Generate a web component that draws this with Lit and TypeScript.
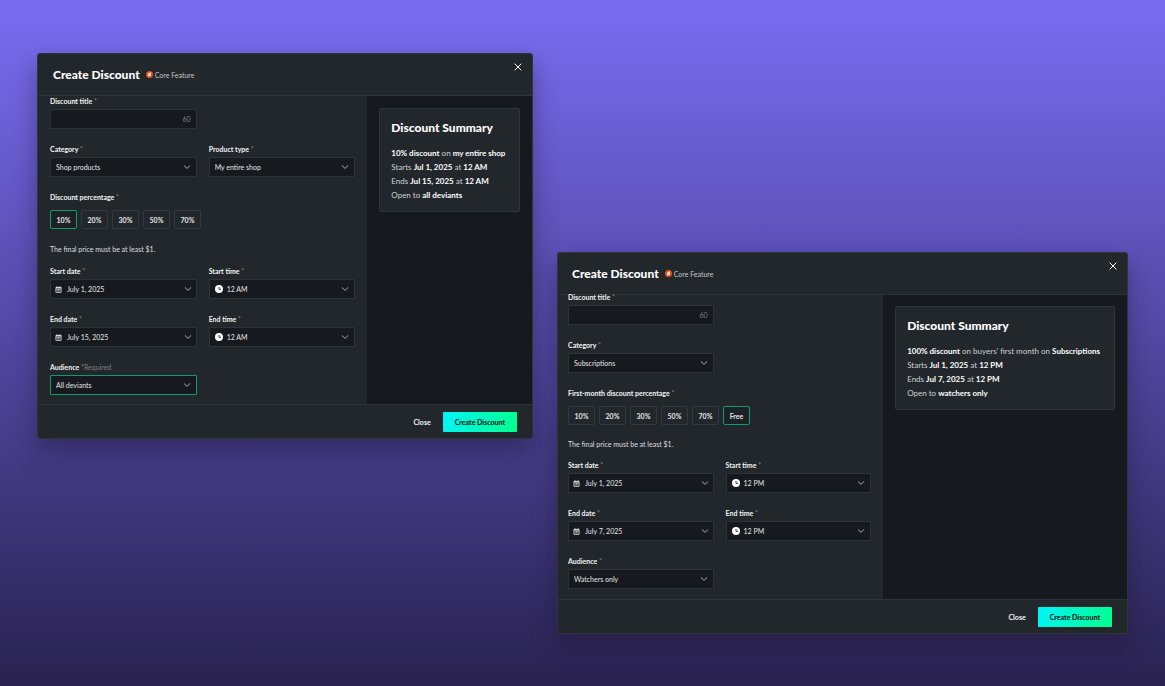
import { LitElement, html, css, nothing } from "lit";
import { customElement, property } from "lit/decorators.js";
import { classMap } from "lit/directives/class-map.js";

interface DiscountConfig {
  category: string;
  productType?: string;
  percentageLabel: string;
  percentages: string[];
  selected: string;
  startDate: string;
  startTime: string;
  endDate: string;
  endTime: string;
  audience: string;
  audienceActive?: boolean;
  offer: string;
  joiner: string;
  target: string;
  startShort: string;
  endShort: string;
  audienceText: string;
}

const shopSale: DiscountConfig = {
  category: "Shop products",
  productType: "My entire shop",
  percentageLabel: "Discount percentage",
  percentages: ["10%", "20%", "30%", "50%", "70%"],
  selected: "10%",
  startDate: "July 1, 2025",
  startTime: "12 AM",
  endDate: "July 15, 2025",
  endTime: "12 AM",
  audience: "All deviants",
  audienceActive: true,
  offer: "10% discount",
  joiner: "on",
  target: "my entire shop",
  startShort: "Jul 1, 2025",
  endShort: "Jul 15, 2025",
  audienceText: "all deviants",
};

const subscriptionSale: DiscountConfig = {
  category: "Subscriptions",
  percentageLabel: "First-month discount percentage",
  percentages: ["10%", "20%", "30%", "50%", "70%", "Free"],
  selected: "Free",
  startDate: "July 1, 2025",
  startTime: "12 PM",
  endDate: "July 7, 2025",
  endTime: "12 PM",
  audience: "Watchers only",
  offer: "100% discount",
  joiner: "on buyers’ first month on",
  target: "Subscriptions",
  startShort: "Jul 1, 2025",
  endShort: "Jul 7, 2025",
  audienceText: "watchers only",
};

const calendarIcon = html`<svg class="lead" viewBox="0 0 14 14" aria-hidden="true">
  <path fill="currentColor" fill-rule="evenodd" d="M3 .5h2V2h4V.5h2V2h.5A1.500 1.500 0 0 1 13 3.500V12a1.500 1.500 0 0 1-1.500 1.500h-9A1.500 1.500 0 0 1 1 12V3.500A1.500 1.500 0 0 1 2.500 2H3zM2.600 5.200V12h8.800V5.200zM3.500 6.200h1.800v1.800H3.500zm2.600 0h1.800v1.800H6.100zm2.600 0h1.800v1.800H8.700zM3.500 9.200h1.800V11H3.500zm2.600 0h1.800V11H6.100zm2.600 0h1.800V11H8.700z"/>
</svg>`;

const clockIcon = html`<svg class="lead clock" viewBox="0 0 16 16" aria-hidden="true">
  <circle cx="8" cy="8" r="8" fill="#fff" />
  <path d="M8 3.800V8.600h4" fill="none" stroke="#16191f" stroke-width="1.700" />
</svg>`;

const chevron = html`<svg class="chevron" viewBox="0 0 8 8" aria-hidden="true">
  <path d="M1.200 2.700 4 5.400 6.800 2.700" fill="none" stroke="currentColor" stroke-width="0.900" stroke-linecap="round" stroke-linejoin="round" />
</svg>`;

@customElement("discount-dialog")
export class DiscountDialog extends LitElement {
  @property({ attribute: false }) config: DiscountConfig = shopSale;

  static styles = css`
    :host {
      display: block;
    }
    * {
      box-sizing: border-box;
    }
    .dialog {
      display: flex;
      flex-direction: column;
      border: 1px solid #30353a;
      border-radius: 3px;
      overflow: hidden;
      background: #22272b;
      color: #f2f4f4;
      box-shadow: 0 12px 24px rgba(24, 20, 45, 0.4);
      font: 7px/10px Lato, "Noto Sans", sans-serif;
    }
    .header {
      display: flex;
      align-items: center;
      height: 42px;
      padding: 0 7px 0 var(--header-inset, 15px);
      border-bottom: 1px solid #2e3438;
    }
    .title {
      margin: 0;
      font-size: 12px;
      line-height: 16px;
      font-weight: 900;
      color: #fff;
    }
    .core {
      display: flex;
      align-items: center;
      gap: 2px;
      margin-left: 6px;
      color: #c3c6c9;
    }
    .core svg {
      width: 7px;
      height: 7px;
    }
    .dismiss {
      align-self: flex-start;
      display: flex;
      margin: 6px 0 0 auto;
      padding: 3px;
      border: 0;
      background: none;
      color: #fff;
    }
    .dismiss svg {
      width: 8px;
      height: 8px;
    }
    .body {
      display: grid;
      grid-template-columns: var(--body-columns, 2fr 1fr);
    }
    .form {
      display: grid;
      grid-template-columns: 1fr 1fr;
      column-gap: 12px;
      row-gap: 15px;
      margin-top: var(--scroll-shift, 0);
      padding: 0 12px var(--form-end, 9px) var(--form-inset, 12px);
      align-content: start;
    }
    .field {
      grid-column: 1;
      min-width: 0;
    }
    .field.second {
      grid-column: 2;
    }
    .label {
      display: block;
      font-weight: 700;
      color: #f2f4f4;
      margin-bottom: 3px;
      white-space: nowrap;
    }
    .star {
      font-weight: 400;
      color: #7b8187;
    }
    .control {
      display: grid;
      align-items: center;
    }
    .control > * {
      grid-area: 1 / 1;
    }
    .box {
      width: 100%;
      height: 20px;
      margin: 0;
      padding: 0 5px;
      border: 1px solid #2c3237;
      border-radius: 0;
      appearance: none;
      background: #16191e;
      color: #e4e6e8;
      font: inherit;
      outline: none;
    }
    .date .box {
      padding-left: 16px;
    }
    .time .box {
      padding-left: 17px;
    }
    .box.active {
      border-color: #149a70;
      border-radius: 1px;
    }
    .counter {
      justify-self: end;
      padding-right: 6px;
      color: #7b8086;
      pointer-events: none;
    }
    .chevron {
      justify-self: end;
      width: 8px;
      height: 8px;
      margin-right: 6px;
      color: #b9bdc4;
      pointer-events: none;
    }
    .date .chevron {
      margin-right: 5px;
    }
    .lead {
      width: 7px;
      height: 7px;
      margin-left: 5px;
      color: #d9dbdd;
      pointer-events: none;
    }
    .clock {
      width: 8px;
      height: 8px;
      margin-left: 6px;
    }
    .choices {
      grid-column: 1 / -1;
      margin: 0;
      padding: 0;
      border: 0;
      min-width: 0;
    }
    .choices .label {
      padding: 0;
      margin-bottom: 8px;
    }
    .options {
      display: flex;
      gap: 4px;
    }
    .option {
      width: 27px;
      height: 19px;
      padding: 0;
      border: 1px solid #343940;
      border-radius: 2px;
      background: none;
      color: #e4e6e8;
      font: inherit;
      font-weight: 700;
    }
    .option.chosen {
      border-color: #149a70;
      background: #1c2126;
    }
    .hint {
      grid-column: 1 / -1;
      margin: var(--hint-margin, 0 0 -3px);
      color: #dcdfe1;
    }
    .side {
      padding: var(--side-top, 12px) 12px 12px;
      background: #16191e;
    }
    .summary {
      padding: 11px 11px 9px;
      border: 1px solid #30353c;
      border-radius: 2px;
      background: #22272b;
      color: #cfd2d5;
    }
    .summary h3 {
      margin: 0 0 10px;
      font-size: 12px;
      line-height: 16px;
      font-weight: 900;
      color: #fff;
    }
    .summary p {
      margin: 0;
      font-size: 8px;
      line-height: 14px;
      white-space: nowrap;
    }
    .summary strong {
      color: #fff;
    }
    .footer {
      display: flex;
      align-items: center;
      justify-content: flex-end;
      height: 34px;
      padding-right: 15px;
      border-top: 1px solid #2e3438;
    }
    .close,
    .create {
      height: 20px;
      padding: 0 12px;
      border: 0;
      background: none;
      color: #f2f4f4;
      font: inherit;
      font-weight: 700;
    }
    .create {
      border-radius: 1px;
      background: linear-gradient(110deg, #00f4f8, #00ff8c);
      color: #06070d;
    }
  `;

  private star(text = "*") {
    return html`<span class="star">${text}</span>`;
  }

  private select(
    id: string,
    label: string,
    value: string,
    opts: { kind?: "date" | "time"; second?: boolean; active?: boolean } = {}
  ) {
    const icon = opts.kind === "date" ? calendarIcon : opts.kind === "time" ? clockIcon : nothing;
    return html`<div class=${classMap({ field: true, second: !!opts.second })}>
      <label class="label" for=${id}>${label} ${this.star(opts.active ? "*Required" : "*")}</label>
      <div class=${classMap({ control: true, date: opts.kind === "date", time: opts.kind === "time" })}>
        <select id=${id} class=${classMap({ box: true, active: !!opts.active })}>
          <option>${value}</option>
        </select>
        ${icon} ${chevron}
      </div>
    </div>`;
  }

  render() {
    const c = this.config;
    return html`<section class="dialog" role="dialog" aria-labelledby="title">
      <header class="header">
        <h2 class="title" id="title">Create Discount</h2>
        <span class="core">
          <svg viewBox="0 0 14 14" aria-hidden="true">
            <circle cx="7" cy="7" r="7" fill="#e8501c" />
            <path fill="#fff" d="M9.800 2.800v1.900L8.300 7.200h1.500v2.300H7.100l-.9 1.700H4.200V9.300l1.500-2.500H4.200V4.500h2.700l.9-1.700z" />
          </svg>
          Core Feature
        </span>
        <button class="dismiss" aria-label="Dismiss">
          <svg viewBox="0 0 8 8"><path d="M.9.9l6.200 6.200M7.100.9L.9 7.100" stroke="currentColor" stroke-width="1" stroke-linecap="round" /></svg>
        </button>
      </header>
      <div class="body">
        <form class="form">
          <div class="field">
            <label class="label" for="name">Discount title ${this.star()}</label>
            <div class="control">
              <input id="name" class="box" type="text" maxlength="60" />
              <span class="counter">60</span>
            </div>
          </div>
          ${this.select("category", "Category", c.category)}
          ${c.productType ? this.select("product", "Product type", c.productType, { second: true }) : nothing}
          <fieldset class="choices">
            <legend class="label">${c.percentageLabel} ${this.star()}</legend>
            <div class="options">
              ${c.percentages.map(
                (p) => html`<button type="button" aria-pressed=${p === c.selected} class=${classMap({ option: true, chosen: p === c.selected })}>${p}</button>`
              )}
            </div>
          </fieldset>
          <p class="hint">The final price must be at least $1.</p>
          ${this.select("start-date", "Start date", c.startDate, { kind: "date" })}
          ${this.select("start-time", "Start time", c.startTime, { kind: "time", second: true })}
          ${this.select("end-date", "End date", c.endDate, { kind: "date" })}
          ${this.select("end-time", "End time", c.endTime, { kind: "time", second: true })}
          ${this.select("audience", "Audience", c.audience, { active: c.audienceActive })}
        </form>
        <aside class="side">
          <div class="summary">
            <h3>Discount Summary</h3>
            <p><strong>${c.offer}</strong> ${c.joiner} <strong>${c.target}</strong></p>
            <p>Starts <strong>${c.startShort}</strong> at <strong>${c.startTime}</strong></p>
            <p>Ends <strong>${c.endShort}</strong> at <strong>${c.endTime}</strong></p>
            <p>Open to <strong>${c.audienceText}</strong></p>
          </div>
        </aside>
      </div>
      <footer class="footer">
        <button class="close">Close</button>
        <button class="create">Create Discount</button>
      </footer>
    </section>`;
  }
}

@customElement("app-root")
export class AppRoot extends LitElement {
  static styles = css`
    :host {
      display: block;
    }
    .stage {
      box-sizing: border-box;
      display: grid;
      grid-template-columns: 496fr 571fr;
      column-gap: 24px;
      align-items: start;
      min-height: 100vh;
      padding: 53px 37px;
      background: linear-gradient(#7b6cf2, #29224f);
    }
    .subscription {
      --body-columns: 4fr 3fr;
      --header-inset: 14px;
      --form-inset: 10px;
      --form-end: 10px;
      --scroll-shift: -3px;
      --hint-margin: -1px 0 -4px;
      --side-top: 11px;
      margin-top: 199px;
    }
  `;

  render() {
    return html`<main class="stage">
      <discount-dialog .config=${shopSale}></discount-dialog>
      <discount-dialog class="subscription" .config=${subscriptionSale}></discount-dialog>
    </main>`;
  }
}
